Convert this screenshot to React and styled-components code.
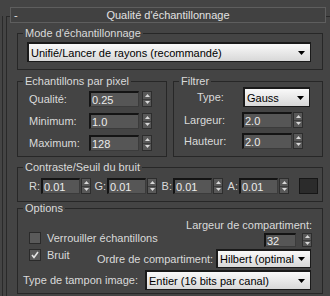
import React from 'react'
import styled, { createGlobalStyle } from 'styled-components'

const GlobalStyle = createGlobalStyle`
  html, body {
    margin: 0;
    padding: 0;
    background: #444444;
  }
  body {
    font-family: "Liberation Sans", Arial, sans-serif;
    font-size: 11px;
  }
`;

function Arrow({ down }) {
  return (
    <svg width="5" height="3" viewBox="0 0 5 3">
      <polygon points={down ? "0,0 5,0 2.5,3" : "0,3 5,3 2.5,0"} fill="#d8d8d8" />
    </svg>
  )
}

function Spinner({ gap = 1, h = 16, top = 0 }) {
  return (
    <SpinBox $gap={gap} $h={h} $top={top}>
      <SpinHalf><Arrow /></SpinHalf>
      <SpinHalf><Arrow down /></SpinHalf>
    </SpinBox>
  )
}

function Dropdown({ w, h, children }) {
  return (
    <Select $w={w} $h={h}>
      <SelectText>{children}</SelectText>
      <svg width="7" height="4" viewBox="0 0 7 4">
        <polygon points="0,0 7,0 3.5,4" fill="#000" />
      </svg>
    </Select>
  )
}

function CheckBox({ checked }) {
  return (
    <Check>
      {checked && (
        <svg width="8" height="8" viewBox="0 0 8 8">
          <polyline points="1,4 3,6.5 7,1" fill="none" stroke="#e6e6e6" strokeWidth="1.6" />
        </svg>
      )}
    </Check>
  )
}

function NumRow({ label, value, labelW, fieldW, gap, indent }) {
  return (
    <FieldRow>
      <Label $w={labelW} $indent={indent}>{label}</Label>
      <Field $w={fieldW}>{value}</Field>
      <Spinner gap={gap} />
    </FieldRow>
  )
}

function Channel({ name, value }) {
  return (
    <ChannelUnit>
      <ChannelLabel>{name}</ChannelLabel>
      <Field $w={39}>{value}</Field>
      <Spinner gap={1} />
    </ChannelUnit>
  )
}

export default function App() {
  return (
    <Page>
      <GlobalStyle />
      <Edge>
        <Frame>
          <TitleBar>
            <Minus>-</Minus>
            <Title>Qualité d'échantillonnage</Title>
            <span />
          </TitleBar>

          <Group $mt={10}>
            <Legend>Mode d'échantillonnage</Legend>
            <Body $pad="8px 10px 7px 9px">
              <Dropdown w={284} h={20}>Unifié/Lancer de rayons (recommandé)</Dropdown>
            </Body>
          </Group>

          <Pair>
            <Group $w={150} $ml={0}>
              <Legend>Echantillons par pixel</Legend>
              <Body $pad="9px 0 5px 11px" $column>
                <NumRow label="Qualité:" value="0.25" labelW={60} fieldW={50} gap={3} />
                <NumRow label="Minimum:" value="1.0" labelW={60} fieldW={50} gap={3} />
                <NumRow label="Maximum:" value="128" labelW={60} fieldW={50} gap={3} />
              </Body>
            </Group>
            <Group $w={150} $ml={0}>
              <Legend>Filtrer</Legend>
              <Body $pad="5px 0 7px 10px" $column $gap={5}>
                <FieldRow $h={20}>
                  <Label $w={59} $indent={13}>Type:</Label>
                  <Dropdown w={67} h={20}>Gauss</Dropdown>
                </FieldRow>
                <NumRow label="Largeur:" value="2.0" labelW={58} fieldW={50} gap={1} />
                <NumRow label="Hauteur:" value="2.0" labelW={58} fieldW={50} gap={1} />
              </Body>
            </Group>
          </Pair>

          <Group $mt={10}>
            <Legend>Contraste/Seuil du bruit</Legend>
            <Body $pad="10px 4px 7px 9px" $gap={0}>
              <Channel name="R:" value="0.01" />
              <Channel name="G:" value="0.01" />
              <Channel name="B:" value="0.01" />
              <Channel name="A:" value="0.01" />
              <Swatch />
            </Body>
          </Group>

          <Group $mt={6}>
            <Legend>Options</Legend>
            <Body $pad="9px 0 3px 0" $column $gap={0}>
              <RightText>Largeur de compartiment:</RightText>
              <OptionRow $h={15} $pad="0 10px 0 11px" $align="flex-start">
                <CheckLine>
                  <CheckBox />
                  <span>Verrouiller échantillons</span>
                </CheckLine>
                <Field $w={32} $h={14} $top={1} $push>32</Field>
                <Spinner gap={6} h={14} top={1} />
              </OptionRow>
              <OptionRow $h={19} $mt={2} $pad="0 11px 0 11px">
                <CheckLine $w={68} $self="flex-start">
                  <CheckBox checked />
                  <span>Bruit</span>
                </CheckLine>
                <span>Ordre de compartiment:</span>
                <Push />
                <Dropdown w={95} h={19}>Hilbert (optimal</Dropdown>
              </OptionRow>
              <OptionRow $h={20} $mt={2} $pad="0 11px 0 5px">
                <span>Type de tampon image:</span>
                <Push />
                <Dropdown w={166} h={20}>Entier (16 bits par canal)</Dropdown>
              </OptionRow>
            </Body>
          </Group>
        </Frame>
      </Edge>
    </Page>
  )
}

const Page = styled.div`
  width: 330px;
  height: 296px;
  overflow: hidden;
  background: #444444;
  color: #dadada;
  padding-left: 2px;
  box-sizing: border-box;
`;

const Edge = styled.div`
  height: 100%;
  border-left: 1px solid #2a2a2a;
  padding-left: 3px;
  box-sizing: border-box;
`;

const Frame = styled.div`
  margin-top: 16px;
  width: 340px;
  height: 300px;
  border-top: 1px solid #292929;
  border-left: 1px solid #292929;
  box-sizing: border-box;
`;

const TitleBar = styled.div`
  box-sizing: border-box;
  margin: -10px 0 0 3px;
  width: 316px;
  height: 16px;
  border: 1px solid #5e5e5e;
  background: #414141;
  display: grid;
  grid-template-columns: 1fr auto 1fr;
  align-items: center;
  color: #e2e2e2;
  line-height: 13px;
`;

const Minus = styled.span`
  padding-left: 3px;
`;

const Title = styled.span`
  white-space: nowrap;
`;

const Group = styled.div`
  box-sizing: border-box;
  width: ${p => p.$w || 306}px;
  margin: ${p => p.$mt || 0}px 0 0 ${p => p.$ml ?? 10}px;
  border: 1px solid #272727;
`;

const Legend = styled.div`
  width: fit-content;
  margin: -7px 0 -6px 5px;
  padding: 0 2px;
  background: #444444;
  line-height: 13px;
  white-space: nowrap;
`;

const Body = styled.div`
  padding: ${p => p.$pad};
  display: flex;
  flex-direction: ${p => (p.$column ? 'column' : 'row')};
  align-items: ${p => (p.$column ? 'stretch' : 'center')};
  gap: ${p => (p.$gap ?? 6)}px;
`;

const Pair = styled.div`
  display: flex;
  gap: 6px;
  margin: 11px 0 0 10px;
`;

const FieldRow = styled.div`
  display: flex;
  align-items: center;
  height: ${p => p.$h || 16}px;
`;

const Label = styled.span`
  box-sizing: border-box;
  width: ${p => p.$w}px;
  padding-left: ${p => p.$indent || 0}px;
  white-space: nowrap;
`;

const Field = styled.div`
  box-sizing: border-box;
  width: ${p => p.$w}px;
  height: ${p => p.$h || 16}px;
  margin-top: ${p => p.$top || 0}px;
  margin-left: ${p => (p.$push ? 'auto' : '0')};
  flex-shrink: 0;
  background: #565656;
  border-top: 2px solid #141414;
  border-left: 2px solid #141414;
  border-right: 1px solid #3b3b3b;
  border-bottom: 1px solid #3b3b3b;
  color: #ececec;
  padding-left: 1px;
  display: flex;
  align-items: center;
  white-space: nowrap;
`;

const SpinBox = styled.div`
  box-sizing: border-box;
  width: 10px;
  height: ${p => p.$h}px;
  margin-left: ${p => p.$gap}px;
  margin-top: ${p => p.$top}px;
  flex-shrink: 0;
  border: 1px solid #2d2d2d;
  background: #585858;
  display: flex;
  flex-direction: column;
`;

const SpinHalf = styled.div`
  flex: 1;
  display: flex;
  align-items: center;
  justify-content: center;
  & + & {
    border-top: 1px solid #3c3c3c;
  }
`;

const Select = styled.div`
  box-sizing: border-box;
  width: ${p => p.$w}px;
  height: ${p => p.$h}px;
  display: flex;
  align-items: center;
  gap: 2px;
  padding: 0 5px 0 2px;
  border: 1px solid #1a1a1a;
  border-left-width: 2px;
  border-top-width: 2px;
  background: linear-gradient(#f9f9f9, #d8d8d8);
  color: #000;
  flex-shrink: 0;
`;

const SelectText = styled.span`
  flex: 1;
  overflow: hidden;
  white-space: nowrap;
`;

const ChannelUnit = styled.div`
  display: flex;
  align-items: center;
  margin-right: 2px;
  flex-shrink: 0;
`;

const ChannelLabel = styled.span`
  width: 14px;
  text-align: right;
  padding-right: 1px;
  box-sizing: border-box;
`;

const Swatch = styled.div`
  box-sizing: border-box;
  width: 19px;
  height: 16px;
  margin-left: auto;
  flex-shrink: 0;
  background: #2b2b2b;
  border: 1px solid #161616;
`;

const RightText = styled.div`
  height: 14px;
  line-height: 14px;
  text-align: right;
  padding-right: 10px;
`;

const OptionRow = styled.div`
  display: flex;
  align-items: ${p => p.$align || 'center'};
  height: ${p => p.$h}px;
  margin-top: ${p => p.$mt || 0}px;
  padding: ${p => p.$pad};
  white-space: nowrap;
`;

const CheckLine = styled.div`
  display: flex;
  align-items: center;
  gap: 6px;
  width: ${p => (p.$w ? `${p.$w}px` : 'auto')};
  align-self: ${p => p.$self || 'auto'};
  line-height: 12px;
`;

const Check = styled.div`
  box-sizing: border-box;
  width: 12px;
  height: 12px;
  border: 1px solid #2a2a2a;
  background: #5a5a5a;
  display: flex;
  align-items: center;
  justify-content: center;
`;

const Push = styled.div`
  flex: 1;
`;
